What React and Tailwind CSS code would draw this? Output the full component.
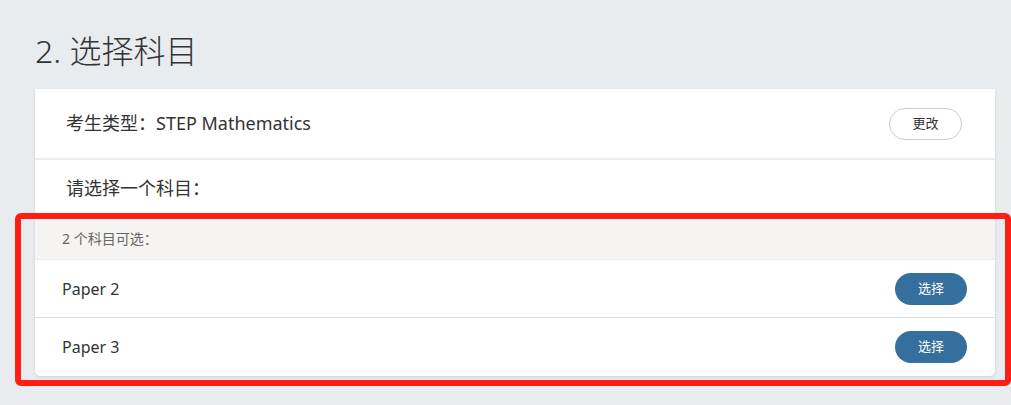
import React from 'react';

const subjects = ['Paper 2', 'Paper 3'];

export default function App() {
  return (
    <div
      className="relative min-h-screen bg-[#e9ecee] px-[35px] pt-[31px] text-[#333]"
      style={{ fontFamily: '"Noto Sans", "Noto Sans CJK SC", sans-serif' }}
    >
      <h1 className="text-[32px] font-light leading-[40px] text-[#333] mb-[18px]">
        2. 选择科目
      </h1>

      <div className="w-[960px] bg-white rounded-b-[5px] shadow-[0_1px_3px_rgba(0,0,0,0.12)]">
        <div className="h-[69px] flex items-center justify-between pl-[31px] pr-[33px]">
          <span className="text-[18px] text-[#333]">考生类型：STEP Mathematics</span>
          <button className="w-[73px] h-[32px] rounded-full border border-[#cccccc] bg-white text-[13px] text-[#333]">
            更改
          </button>
        </div>
        <div className="h-[2px] bg-[#e8ecee]" />
        <div className="h-[58px] flex items-center pl-[31px] pb-[1px]">
          <span className="text-[18px] text-[#333]">请选择一个科目：</span>
        </div>

        <div className="h-[42px] flex items-center pl-[27px] bg-[#f5f4f2] border-b border-[#ebebeb] text-[14px] text-[#666]">
          2 个科目可选：
        </div>
        {subjects.map((s, i) => (
          <div
            key={s}
            className={`h-[58px] flex items-center justify-between pl-[27px] pr-[28px] ${
              i < subjects.length - 1 ? 'border-b border-[#d9dfe0]' : ''
            }`}
          >
            <span className="text-[16px] text-[#333]">{s}</span>
            <button className="w-[72px] h-[32px] rounded-full bg-[#356f9e] text-white text-[13px]">
              选择
            </button>
          </div>
        ))}
      </div>

      {/* annotation outline */}
      <div className="absolute left-[15px] top-[213px] w-[996px] h-[173px] border-[6px] border-[#ff1e14] rounded-[6px] pointer-events-none" />
    </div>
  );
}
